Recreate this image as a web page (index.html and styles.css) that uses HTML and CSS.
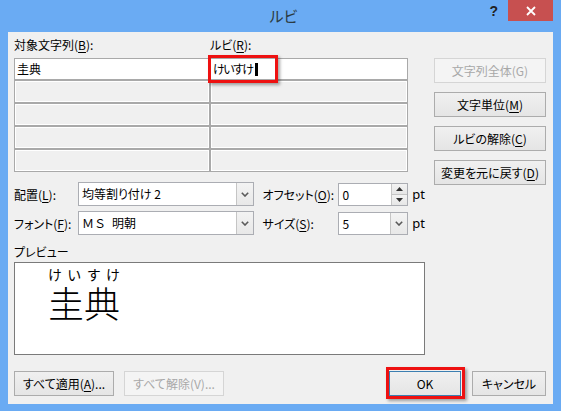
FILE: index.html
```html
<!DOCTYPE html>
<html lang="ja">
<head>
<meta charset="utf-8">
<title>ルビ</title>
<link rel="stylesheet" href="styles.css">
</head>
<body>
<div class="window">
  <div class="titlebar">
    <div class="tb-spacer"></div>
    <div class="title">ルビ</div>
    <div class="tb-controls">
      <span class="help">?</span>
      <span class="close"><svg width="10" height="10" viewBox="0 0 10 10"><path d="M1 1 L9 9 M9 1 L1 9" stroke="#fff" stroke-width="1.8" fill="none"/></svg></span>
    </div>
  </div>
  <div class="client">
    <div class="main">
      <div class="left">
        <div class="labels">
          <span>対象文字列(<u>B</u>):</span>
          <span>ルビ(<u>R</u>):</span>
        </div>
        <div class="grid">
          <div class="cell first">圭典</div>
          <div class="cell first"><span class="kana">けいすけ</span><span class="caret"></span></div>
          <div class="cell"></div><div class="cell"></div>
          <div class="cell"></div><div class="cell"></div>
          <div class="cell"></div><div class="cell"></div>
          <div class="cell"></div><div class="cell"></div>
          <div class="mark mark-ruby"></div>
        </div>
        <div class="form-row row1">
          <span class="lbl lbl-left">配置(<u>L</u>):</span>
          <div class="combo wide"><span class="val">均等割り付け 2</span><span class="drop"><svg width="8" height="5" viewBox="0 0 8 5"><path d="M0.8 0.8 L4 4 L7.2 0.8" stroke="#5a5a5a" stroke-width="1.6" fill="none"/></svg></span></div>
          <span class="lbl lbl-right">オフセット(<u>O</u>):</span>
          <div class="combo small"><span class="val">0</span><span class="spin-btns"><span class="sb"><svg width="7" height="4" viewBox="0 0 7 4"><path d="M0 4 L3.5 0 L7 4 Z" fill="#333"/></svg></span><span class="sb"><svg width="7" height="4" viewBox="0 0 7 4"><path d="M0 0 L3.5 4 L7 0 Z" fill="#333"/></svg></span></span></div>
          <span class="unit">pt</span>
        </div>
        <div class="form-row row2">
          <span class="lbl lbl-left">フォント(<u>F</u>):</span>
          <div class="combo wide"><span class="val fw">ＭＳ&ensp;明朝</span><span class="drop"><svg width="8" height="5" viewBox="0 0 8 5"><path d="M0.8 0.8 L4 4 L7.2 0.8" stroke="#5a5a5a" stroke-width="1.6" fill="none"/></svg></span></div>
          <span class="lbl lbl-right">サイズ(<u>S</u>):</span>
          <div class="combo small"><span class="val">5</span><span class="drop"><svg width="8" height="5" viewBox="0 0 8 5"><path d="M0.8 0.8 L4 4 L7.2 0.8" stroke="#5a5a5a" stroke-width="1.6" fill="none"/></svg></span></div>
          <span class="unit">pt</span>
        </div>
        <div class="preview-label">プレビュー</div>
        <div class="preview">
          <div class="ruby-group">
            <div class="rt"><span>け</span><span>い</span><span>す</span><span>け</span></div>
            <div class="rb">圭典</div>
          </div>
        </div>
      </div>
      <div class="side">
        <button class="btn disabled">文字列全体(G)</button>
        <button class="btn">文字単位(<u>M</u>)</button>
        <button class="btn">ルビの解除(<u>C</u>)</button>
        <button class="btn">変更を元に戻す(<u>D</u>)</button>
      </div>
    </div>
    <div class="bottom">
      <button class="btn bw">すべて適用(<u>A</u>)...</button>
      <button class="btn bw disabled">すべて解除(V)...</button>
      <div class="fill"></div>
      <button class="btn ok">OK</button>
      <button class="btn cancel">キャンセル</button>
    </div>
  </div>
</div>
</body>
</html>
```
FILE: styles.css
```css
* { box-sizing: border-box; }
html, body { margin: 0; padding: 0; }
body {
  width: 561px;
  height: 411px;
  overflow: hidden;
  font-family: "Noto Sans CJK JP", "Noto Sans", sans-serif;
  font-size: 12px;
  color: #000;
  font-feature-settings: "palt";
}
u { text-decoration: underline; text-underline-offset: 2px; }

.window {
  width: 561px;
  height: 411px;
  background: #6aabf3;
  padding: 0 8px 7px;
  display: flex;
  flex-direction: column;
}

.titlebar {
  height: 32px;
  flex-shrink: 0;
  display: grid;
  grid-template-columns: 1fr auto 1fr;
}
.title {
  font-size: 15px;
  line-height: 32px;
  color: #2b3a40;
  padding-left: 6px;
}
.tb-controls {
  display: flex;
  justify-content: flex-end;
  align-items: flex-start;
}
.help {
  font-family: "Liberation Sans", sans-serif;
  font-weight: bold;
  font-size: 14px;
  color: #222;
  line-height: 22px;
  margin-right: 10px;
}
.close {
  width: 45px;
  height: 21px;
  background: #c75050;
  display: flex;
  align-items: center;
  justify-content: center;
}
.close svg { display: block; }

.client {
  flex: 1;
  background: #f0f0f0;
  padding: 5px 7px 0 6px;
  display: flex;
  flex-direction: column;
}

.main { display: flex; gap: 9px; }
.left { width: 411px; display: flex; flex-direction: column; }
.side {
  width: 112px;
  padding-top: 21px;
  display: flex;
  flex-direction: column;
  gap: 9px;
}

.labels {
  display: grid;
  grid-template-columns: 196px 198px;
  height: 16px;
  line-height: 16px;
}

.grid {
  position: relative;
  margin-top: 5px;
  width: 394px;
  display: grid;
  grid-template-columns: 196px 198px;
  grid-template-rows: 22px repeat(4, 23px);
}
.cell {
  border: 1px solid #a9a9a9;
  box-shadow: inset 0 0 0 1px #fff;
  background: #f0f0f0;
  padding-left: 2px;
  line-height: 20px;
  display: flex;
  align-items: center;
}
.cell.first { background: #fff; box-shadow: none; }
.kana { letter-spacing: -1.5px; }
.caret {
  display: inline-block;
  width: 3px;
  height: 13px;
  background: #000;
  margin-left: 2px;
}
.mark {
  position: absolute;
  border: 3px solid #ee1111;
  box-shadow: 2px 2px 3px rgba(0,0,0,0.35);
  pointer-events: none;
}
.mark-ruby { left: 194px; top: -3px; width: 70px; height: 28px; }

.form-row {
  display: flex;
  align-items: center;
  height: 24px;
}
.row1 { margin-top: 10px; }
.row2 { margin-top: 5px; }
.lbl-left { width: 64px; }
.lbl-right { width: 76px; margin-left: 9px; }
.combo {
  height: 24px;
  border: 1px solid #abadb3;
  background: #fff;
  display: flex;
}
.combo.wide { width: 176px; }
.combo.small { width: 70px; height: 23px; }
.val { flex: 1; padding-left: 3px; line-height: 21px; }
.val.fw { font-feature-settings: normal; }
.drop {
  width: 17px;
  border-left: 1px solid #c5c5c5;
  background: linear-gradient(#f3f3f3, #e8e8e8);
  display: flex;
  align-items: center;
  justify-content: center;
}
.spin-btns {
  width: 16px;
  display: flex;
  flex-direction: column;
  border-left: 1px solid #c5c5c5;
}
.sb {
  flex: 1;
  display: flex;
  align-items: center;
  justify-content: center;
  background: linear-gradient(#f3f3f3, #e6e6e6);
}
.sb + .sb { border-top: 1px solid #c5c5c5; }
.unit { margin-left: 4px; font-family: "Noto Sans", sans-serif; font-size: 13px; }

.preview-label { margin-top: 9px; line-height: 16px; }
.preview {
  margin-top: 2px;
  height: 93px;
  border: 1px solid #7a7a7a;
  background: #fff;
  padding: 3px 0 0 33px;
}
.ruby-group { display: inline-flex; flex-direction: column; width: 72px; }
.rt {
  display: flex;
  justify-content: space-between;
  font-size: 14px;
  line-height: 15px;
  font-feature-settings: normal;
}
.rb {
  font-size: 36px;
  line-height: 36px;
  margin-top: 2px;
  font-weight: 300;
  font-feature-settings: normal;
}

.btn {
  height: 25px;
  padding: 0;
  border: 1px solid #acacac;
  background: linear-gradient(#f0f0f0, #e5e5e5);
  font-family: inherit;
  font-size: 12px;
  color: #000;
  line-height: 23px;
  text-align: center;
  font-feature-settings: "palt";
}
.btn.disabled {
  border-color: #d5d5d5;
  background: #f4f4f4;
  color: #a8a8a8;
}

.bottom {
  display: flex;
  margin-top: 16px;
  gap: 10px;
}
.bw { width: 100px; }
.fill { flex: 1; }
.ok {
  width: 72px;
  position: relative;
  border-color: #3c7fb1;
  margin-right: 1px;
}
.ok::after {
  content: "";
  position: absolute;
  left: -4px; right: -5px; top: -5px; bottom: -4px;
  border: 3px solid #ee1111;
  box-shadow: 2px 2px 3px rgba(0,0,0,0.35);
}
.cancel { width: 74px; }
```
